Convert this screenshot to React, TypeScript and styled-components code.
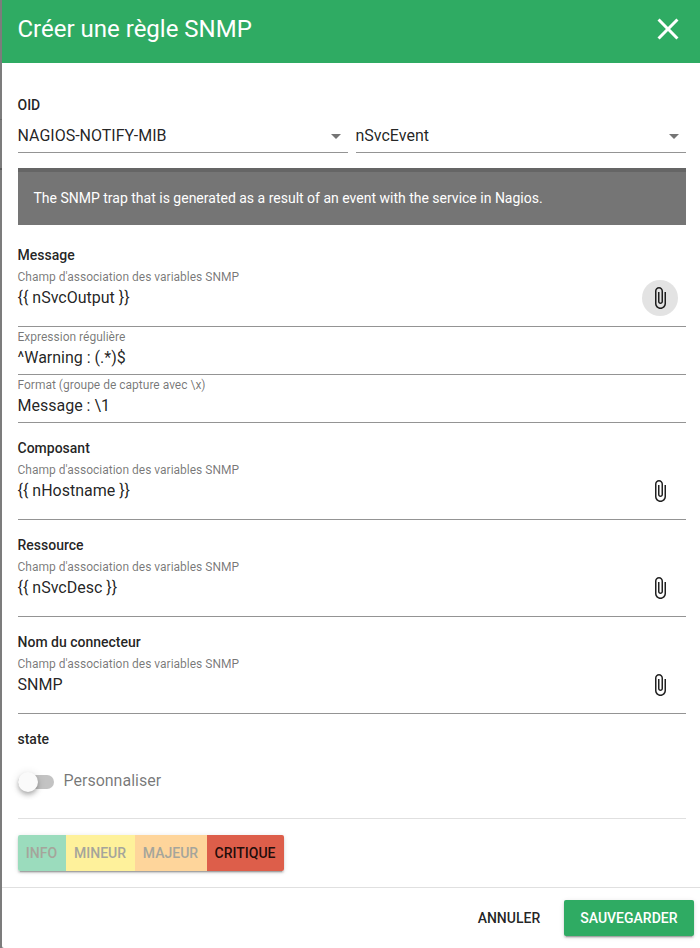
import React from "react";
import styled, { createGlobalStyle } from "styled-components";

const GlobalStyle = createGlobalStyle`
  *, *::before, *::after { box-sizing: border-box; }
  body {
    margin: 0;
    background: #7a7a7a;
    font-family: Roboto, "Liberation Sans", sans-serif;
    color: rgba(0, 0, 0, 0.87);
    overflow: hidden;
  }
  button { font-family: inherit; }
`;

const Backdrop = styled.div`
  height: 948px;
  padding-left: 1.5px;
  background:
    linear-gradient(#696969, #696969) 0 119px / 2px 1px no-repeat,
    linear-gradient(#5c5c5c, #5c5c5c) 0 168px / 2px 2px no-repeat,
    #7c7c7c;
`;

const Dialog = styled.section`
  height: 948px;
  display: flex;
  flex-direction: column;
  background: #fff;
  border-bottom-left-radius: 2px;
`;

const Header = styled.header`
  flex: 0 0 63px;
  display: flex;
  justify-content: space-between;
  align-items: flex-start;
  padding: 11px 14.5px 0 16px;
  background: #2fab63;
  color: #fff;
`;

const Title = styled.h1`
  margin: 0;
  font-size: 24px;
  font-weight: 400;
  line-height: 36px;
`;

const IconButton = styled.button<{ $active?: boolean; $size?: number }>`
  width: 36px;
  height: 36px;
  flex: none;
  display: flex;
  align-items: center;
  justify-content: center;
  padding: 0;
  border: 0;
  border-radius: 50%;
  background: ${(p) => (p.$active ? "#e3e3e3" : "transparent")};
  color: inherit;
  svg {
    width: ${(p) => p.$size ?? 24}px;
    height: ${(p) => p.$size ?? 24}px;
    fill: currentColor;
  }
`;

const Content = styled.div`
  flex: 1;
  padding: 32px 14.5px 0 16px;
`;

const SectionTitle = styled.h2<{ $top?: number }>`
  margin: ${(p) => p.$top ?? 15}px 0 0;
  font-size: 14px;
  font-weight: 500;
  line-height: 20px;
`;

const SelectRow = styled.div`
  display: grid;
  grid-template-columns: 1fr 1fr;
  gap: 8px;
`;

const Select = styled.div`
  height: 38px;
  display: flex;
  justify-content: space-between;
  padding-top: 9px;
  border-bottom: 1px solid #949494;
  font-size: 16px;
  line-height: 24px;
  svg {
    width: 24px;
    height: 24px;
    fill: #757575;
  }
`;

const Notice = styled.div`
  height: 57px;
  margin-top: 15px;
  padding: 16px 16px 0;
  border-top: 4px solid #656565;
  background: #757575;
  color: #fff;
  font-size: 14px;
  line-height: 20px;
`;

const FieldBox = styled.div<{ $tall?: boolean }>`
  height: ${(p) => (p.$tall ? 62 : 48)}px;
  display: flex;
  justify-content: space-between;
  padding: ${(p) => (p.$tall ? 4 : 2)}px 8px 0 0;
  border-bottom: 1px solid #949494;
  ${IconButton} { margin-top: 11px; }
`;

const FieldLabel = styled.div`
  font-size: 12px;
  line-height: 16px;
  color: rgba(0, 0, 0, 0.54);
`;

const FieldValue = styled.div`
  margin-top: 3px;
  font-size: 16px;
  line-height: 20px;
`;

const SwitchRow = styled.div`
  display: flex;
  align-items: center;
  height: 24px;
  margin-top: 21px;
  font-size: 16px;
  line-height: 20px;
  color: rgba(0, 0, 0, 0.54);
`;

const SwitchLabel = styled.span`
  padding-bottom: 2px;
`;

const Track = styled.span`
  width: 36px;
  height: 14px;
  display: flex;
  align-items: center;
  margin-right: 10px;
  border-radius: 8px;
  background: #c3c3c3;
`;

const Thumb = styled.span`
  flex: 0 0 20px;
  height: 20px;
  border-radius: 50%;
  background: #fafafa;
  box-shadow: 0 2px 4px -1px rgba(0, 0, 0, 0.2), 0 4px 5px rgba(0, 0, 0, 0.14),
    0 1px 10px rgba(0, 0, 0, 0.12);
`;

const Divider = styled.hr`
  height: 1px;
  margin: 24px 0 16px;
  border: 0;
  background: #e0e0e0;
`;

const raised = `
  box-shadow: 0 3px 1px -2px rgba(0, 0, 0, 0.2), 0 2px 2px rgba(0, 0, 0, 0.14),
    0 1px 5px rgba(0, 0, 0, 0.12);
`;

const StateGroup = styled.div`
  display: inline-flex;
  vertical-align: top;
  border-radius: 2px;
  ${raised}
`;

const StateButton = styled.button<{ $color: string; $width: number; $selected?: boolean }>`
  width: ${(p) => p.$width}px;
  height: 36px;
  padding: 0;
  border: 0;
  background: ${(p) => p.$color};
  color: ${(p) => (p.$selected ? "rgba(0, 0, 0, 0.87)" : "#a5a59b")};
  font-size: 14px;
  font-weight: 500;
  &:first-child { border-radius: 2px 0 0 2px; }
  &:last-child { border-radius: 0 2px 2px 0; }
`;

const Footer = styled.footer`
  flex: 0 0 61px;
  display: flex;
  justify-content: flex-end;
  gap: 8px;
  padding: 12px 6.5px 0;
  border-top: 1px solid #e0e0e0;
`;

const ActionButton = styled.button<{ $primary?: boolean }>`
  height: 36px;
  padding: 0 16px;
  border: 0;
  border-radius: 2px;
  font-size: 14px;
  font-weight: 500;
  background: ${(p) => (p.$primary ? "#2fab63" : "transparent")};
  color: ${(p) => (p.$primary ? "#fff" : "rgba(0, 0, 0, 0.87)")};
  ${(p) => p.$primary && raised}
`;

const paths = {
  close:
    "M19 6.41L17.59 5 12 10.59 6.41 5 5 6.41 10.59 12 5 17.59 6.41 19 12 13.41 17.59 19 19 17.59 13.41 12z",
  attach:
    "M16.5 6v11.5c0 2.21-1.79 4-4 4s-4-1.79-4-4V5c0-1.38 1.12-2.5 2.5-2.5s2.5 1.12 2.5 2.5v10.5c0 .55-.45 1-1 1s-1-.45-1-1V6H10v9.5c0 1.38 1.12 2.5 2.5 2.5s2.5-1.12 2.5-2.5V5c0-2.21-1.79-4-4-4S7 2.79 7 5v12.5c0 3.04 2.46 5.5 5.5 5.5s5.5-2.46 5.5-5.5V6h-1.5z",
  caret: "M7 10l5 5 5-5z",
};

const Icon = ({ name }: { name: keyof typeof paths }) => (
  <svg viewBox="0 0 24 24" aria-hidden="true">
    <path d={paths[name]} />
  </svg>
);

type FieldProps = { label: string; value: string; attach?: boolean; active?: boolean };

const Field = ({ label, value, attach, active }: FieldProps) => (
  <FieldBox $tall={attach}>
    <div>
      <FieldLabel>{label}</FieldLabel>
      <FieldValue>{value}</FieldValue>
    </div>
    {attach && (
      <IconButton $active={active} aria-label="Variables">
        <Icon name="attach" />
      </IconButton>
    )}
  </FieldBox>
);

const VARIABLES_LABEL = "Champ d'association des variables SNMP";

const mappings = [
  { title: "Composant", value: "{{ nHostname }}" },
  { title: "Ressource", value: "{{ nSvcDesc }}" },
  { title: "Nom du connecteur", value: "SNMP" },
];

const states = [
  { name: "INFO", color: "#9bdcbd", width: 48 },
  { name: "MINEUR", color: "#fef19b", width: 69 },
  { name: "MAJEUR", color: "#fed59b", width: 72 },
  { name: "CRITIQUE", color: "#dd5e4a", width: 77, selected: true },
];

export default function App() {
  return (
    <Backdrop>
      <GlobalStyle />
      <Dialog>
        <Header>
          <Title>Créer une règle SNMP</Title>
          <IconButton $size={36} aria-label="Fermer">
            <Icon name="close" />
          </IconButton>
        </Header>
        <Content>
          <SectionTitle $top={0}>OID</SectionTitle>
          <SelectRow>
            <Select>
              NAGIOS-NOTIFY-MIB
              <Icon name="caret" />
            </Select>
            <Select>
              nSvcEvent
              <Icon name="caret" />
            </Select>
          </SelectRow>
          <Notice>
            The SNMP trap that is generated as a result of an event with the service in Nagios.
          </Notice>

          <SectionTitle $top={20}>Message</SectionTitle>
          <Field label={VARIABLES_LABEL} value="{{ nSvcOutput }}" attach active />
          <Field label="Expression régulière" value="^Warning : (.*)$" />
          <Field label="Format (groupe de capture avec \x)" value="Message : \1" />

          {mappings.map((m) => (
            <React.Fragment key={m.title}>
              <SectionTitle>{m.title}</SectionTitle>
              <Field label={VARIABLES_LABEL} value={m.value} attach />
            </React.Fragment>
          ))}

          <SectionTitle>state</SectionTitle>
          <SwitchRow>
            <Track>
              <Thumb />
            </Track>
            <SwitchLabel>Personnaliser</SwitchLabel>
          </SwitchRow>
          <Divider />
          <StateGroup>
            {states.map((s) => (
              <StateButton key={s.name} $color={s.color} $width={s.width} $selected={s.selected}>
                {s.name}
              </StateButton>
            ))}
          </StateGroup>
        </Content>
        <Footer>
          <ActionButton>ANNULER</ActionButton>
          <ActionButton $primary>SAUVEGARDER</ActionButton>
        </Footer>
      </Dialog>
    </Backdrop>
  );
}
